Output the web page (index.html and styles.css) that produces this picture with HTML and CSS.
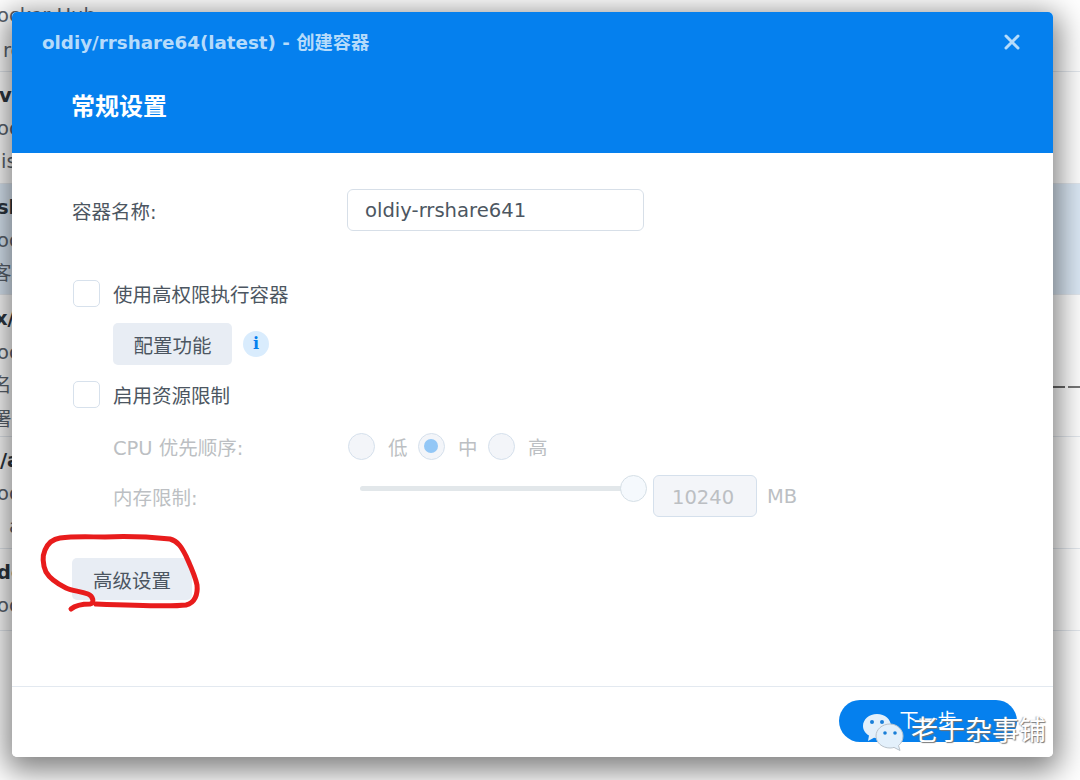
FILE: index.html
```html
<!DOCTYPE html>
<html lang="zh">
<head>
<meta charset="utf-8">
<title>创建容器</title>
<link rel="stylesheet" href="styles.css">
</head>
<body>
<div class="list">
  <div class="row row-a"><p class="sub lat">ocker Hub</p><p class="sub pad-r">rere</p></div>
  <div class="row row-b"><p class="name pad-v">voo</p><p class="sub lat">oo</p><p class="sub pad-i">is</p></div>
  <div class="row row-b selected"><p class="name pad-s">sh</p><p class="sub lat">oo</p><p class="sub">客户</p></div>
  <div class="row row-c"><p class="name pad-x">x/</p><p class="sub lat">oo</p><p class="sub">名义</p><p class="sub">署</p><span class="dash"></span></div>
  <div class="row row-b"><p class="name pad-slash">/a</p><p class="sub lat">oo</p><p class="sub pad-a">a</p></div>
  <div class="row row-d"><p class="name pad-s">de</p><p class="sub lat">oo</p></div>
</div>

<section class="modal">
  <header class="head">
    <div class="title-bar">
      <span class="title">oldiy/rrshare64(latest) - 创建容器</span>
      <svg class="close" width="16" height="16" viewBox="0 0 16 16"><path d="M2 2L14 14M14 2L2 14" stroke="#b5dbfb" stroke-width="3" stroke-linecap="round" fill="none"/></svg>
    </div>
    <h1 class="step">常规设置</h1>
  </header>

  <div class="body">
    <div class="name-row">
      <label class="field-label">容器名称:</label>
      <div class="text-input">oldiy-rrshare641</div>
    </div>
    <div class="check-row first-check"><span class="check"></span><span>使用高权限执行容器</span></div>
    <div class="cap-row">
      <button class="btn">配置功能</button>
      <span class="info">i</span>
    </div>
    <div class="check-row"><span class="check"></span><span>启用资源限制</span></div>
    <div class="cpu-row disabled">
      <span class="sub-label">CPU 优先顺序:</span>
      <span class="radio"></span><span class="radio-text">低</span>
      <span class="radio on"></span><span class="radio-text">中</span>
      <span class="radio"></span><span class="radio-text">高</span>
    </div>
    <div class="mem-row disabled">
      <span class="sub-label">内存限制:</span>
      <span class="slider"><span class="thumb"></span></span>
      <span class="num">10240</span>
      <span class="unit">MB</span>
    </div>
    <button class="btn adv">高级设置</button>
  </div>

  <footer class="foot">
    <button class="next">下一步</button>
  </footer>
</section>

<svg class="scribble" width="1080" height="780" viewBox="0 0 1080 780">
  <path d="M71 609C76 605 84 604 90 604C95 603 93 596 88 594C80 591 72 591 66 588C58 584 50 579 46 572C43 565 42 557 45 550C48 543 53 539 60 538C75 536 90 537 105 537C125 536 150 537 170 539C178 541 182 548 186 556C190 565 195 575 197 585C198 594 195 603 186 605C170 607 120 605 96 604" fill="none" stroke="#e81c1c" stroke-width="5" stroke-linecap="round" stroke-linejoin="round"/>
</svg>

<div class="mark">
  <svg class="mark-icon" width="46" height="42" viewBox="0 0 46 42">
    <path d="M15 4C7 4 1 9.500 1 16C1 20 3.500 23.500 7 25.500L6 31L12 27.700C13 28 14 28 15 28C23 28 29 22.500 29 16C29 9.500 23 4 15 4Z" fill="#e3f0fb"/>
    <circle cx="10" cy="12" r="2" fill="#1a7fd8"/><circle cx="20" cy="12" r="2" fill="#1a7fd8"/>
    <path d="M28 14C20 14 14 19.500 14 26C14 32.500 20 38 28 38C29.500 38 31 37.800 32 37.400L38 40.500L36.500 35.500C39.500 33.300 41 30 41 26C41 19.500 35 14 28 14Z" fill="#e3f0fb" stroke="#b9c2ca" stroke-width="1"/>
    <circle cx="23" cy="23" r="1.800" fill="#1a7fd8"/><circle cx="33" cy="23" r="1.800" fill="#1a7fd8"/>
  </svg>
  <span class="mark-text">老于杂事铺</span>
</div>
</body>
</html>
```
FILE: styles.css
```css
* { box-sizing: border-box; }
html, body { margin: 0; padding: 0; }
body {
  width: 1080px;
  height: 780px;
  overflow: hidden;
  position: relative;
  background: #fff;
  font-family: "DejaVu Sans", "Noto Sans CJK SC", sans-serif;
  color: #4c5661;
}
p { margin: 0; white-space: nowrap; }
button { font-family: inherit; border: 0; }

.list { display: flex; flex-direction: column; }
.row {
  position: relative;
  border-bottom: 1px solid #e3e8ee;
  display: flex;
  flex-direction: column;
  font-size: 19.500px;
  margin-left: -8px;
}
.row-a { height: 72px; padding-top: 3px; gap: 9px; }
.row-b { height: 111.500px; padding-top: 11px; gap: 7px; }
.row-c { height: 142px; padding-top: 11px; gap: 7.500px; }
.row-d { height: 82px; padding-top: 11px; gap: 7px; }
.selected { background: #dce9f6; }
.name { font-weight: 700; color: #2d3640; line-height: 26px; }
.sub { color: #5b646e; line-height: 26px; }
.lat { padding-left: 5px; }
.pad-r { padding-left: 11px; }
.pad-i { padding-left: 9px; }
.pad-a { padding-left: 17px; }
.pad-v { padding-left: 7px; }
.pad-s { padding-left: 5px; }
.pad-x { padding-left: 3px; }
.pad-slash { padding-left: 8px; }
.dash {
  position: absolute;
  left: 1061px;
  top: 91px;
  width: 27px;
  height: 2px;
  background: linear-gradient(to right, #666 0 12px, transparent 12px 15px, #777 15px 27px);
}

body::before {
  content: "";
  position: absolute;
  left: 12px;
  top: 12px;
  width: 1041px;
  height: 745px;
  border-radius: 5px;
  box-shadow: 0 8px 30px 6px rgba(0, 0, 0, .5);
  z-index: 1;
}
.modal {
  position: absolute;
  left: 12px;
  top: 12px;
  z-index: 2;
  width: 1041px;
  height: 745px;
  background: #fff;
  border-radius: 5px;
  overflow: hidden;
  display: flex;
  flex-direction: column;
}

.head { height: 141px; background: #0580ee; flex: none; }
.title-bar {
  display: flex;
  justify-content: space-between;
  align-items: center;
  height: 60px;
  padding: 0 33px 0 30px;
}
.title { font-size: 18.300px; font-weight: 700; color: #b5dbfb; position: relative; top: -1px; white-space: nowrap; }
.step { margin: 0; padding: 0 0 0 59px; font-size: 24px; line-height: 32px; font-weight: 700; color: #fff; position: relative; top: 19px; }

.body { flex: 1; padding: 36px 0 0 60px; font-size: 19.500px; }
.name-row { display: flex; align-items: center; height: 42px; }
.field-label { width: 275px; white-space: nowrap; }
.text-input {
  width: 297px;
  height: 42px;
  border: 1.500px solid #d7dfe8;
  border-radius: 6px;
  padding-left: 17px;
  line-height: 41px;
  font-size: 19.600px;
  white-space: nowrap;
}
.check-row { display: flex; align-items: center; height: 28px; gap: 13px; padding-left: 1px; margin-top: 15px; }
.first-check { margin-top: 48px; }
.check { width: 27px; height: 27px; border: 1.500px solid #d7e1ec; border-radius: 5px; background: #fff; flex: none; }
.cap-row { display: flex; align-items: center; gap: 11px; padding-left: 41px; margin-top: 16px; }
.btn {
  width: 119px;
  height: 42px;
  background: #e8edf4;
  border-radius: 5px;
  color: #4c5661;
  font-size: 19.500px;
  padding: 0;
}
.info {
  width: 26px;
  height: 26px;
  border-radius: 50%;
  background: #d9ecfd;
  color: #0580ee;
  font: 700 16px/26px "DejaVu Serif", serif;
  text-align: center;
}
.disabled { color: #bcbfc3; }
.cpu-row { display: flex; align-items: center; height: 28px; padding-left: 41px; margin-top: 24px; }
.sub-label { width: 235px; white-space: nowrap; }
.radio { width: 27px; height: 27px; border-radius: 50%; border: 1.500px solid #d5e0ec; background: #f3f5f9; position: relative; flex: none; }
.radio.on::after {
  content: "";
  position: absolute;
  left: 5px;
  top: 5px;
  width: 14px;
  height: 14px;
  border-radius: 50%;
  background: #93c7f6;
}
.radio-text { width: 43px; padding-left: 13px; white-space: nowrap; }
.mem-row { display: flex; align-items: center; height: 42px; padding-left: 41px; margin-top: 15px; }
.mem-row .sub-label { width: 247px; }
.slider { width: 273px; height: 5px; background: #e2e7ea; border-radius: 3px; position: relative; top: -8px; flex: none; }
.thumb {
  position: absolute;
  right: -14px;
  top: -11px;
  width: 27px;
  height: 27px;
  border-radius: 50%;
  background: #f5f9fd;
  border: 1.500px solid #d5dfe6;
}
.num {
  width: 104px;
  height: 42px;
  margin-left: 20px;
  border: 1.500px solid #d5e0ec;
  border-radius: 6px;
  background: #f3f5f9;
  padding-left: 18px;
  line-height: 43px;
}
.unit { margin-left: 10px; }
.adv { display: block; width: 120px; margin-top: 41px; }

.foot { height: 71px; border-top: 1px solid #e3e9f0; flex: none; padding: 13px 36px 0 0; display: flex; justify-content: flex-end; align-items: flex-start; }
.next {
  width: 178px;
  height: 42px;
  border-radius: 21px;
  background: #0580ee;
  color: #fff;
  font-size: 19px;
  padding: 0 0 5px 0;
}

.scribble { position: absolute; left: 0; top: 0; z-index: 3; pointer-events: none; }
.mark {
  position: absolute;
  left: 862px;
  top: 708px;
  z-index: 4;
  display: flex;
  align-items: center;
}
.mark-icon { flex: none; }
.mark-text {
  margin-left: 3px;
  font-size: 27px;
  line-height: 46px;
  color: #fff;
  white-space: nowrap;
  text-shadow: 1px 1px 1px #777, -1px 0 1px rgba(110, 110, 110, .5);
}
```
